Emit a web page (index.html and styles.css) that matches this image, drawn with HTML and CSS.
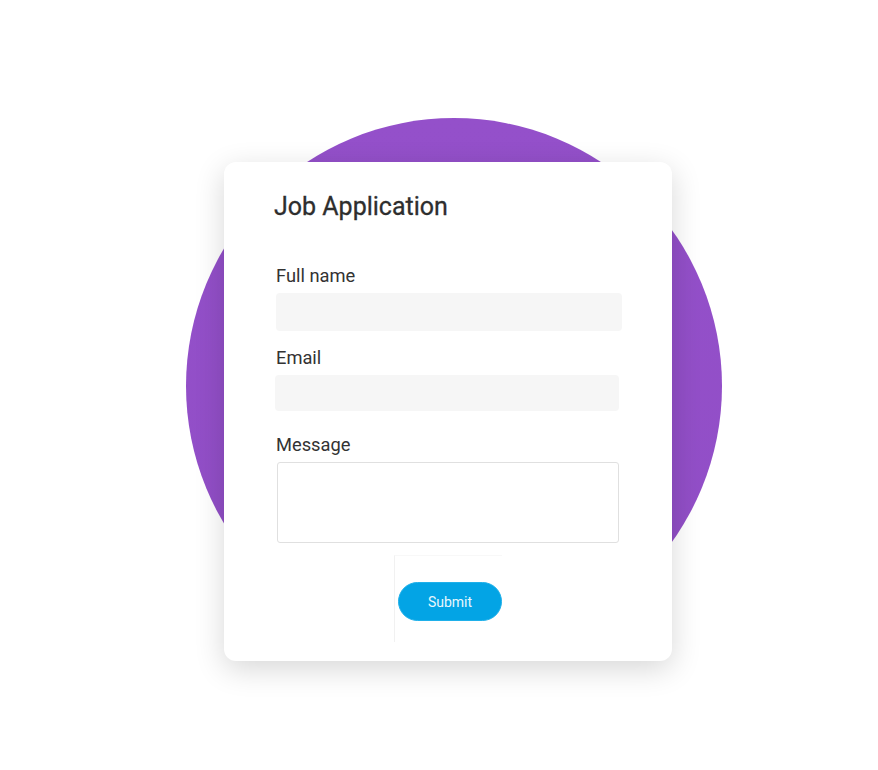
FILE: index.html
```html
<!DOCTYPE html>
<html lang="en">
<head>
    <meta charset="UTF-8">
    <meta name="viewport" content="width=device-width, initial-scale=1.0">
    <title>Job Application</title>
    <link rel="stylesheet" href="styles.css">
</head>
<body>
    <div class="stage">
        <div class="blob"></div>

        <div class="card">
            <h2 class="card-title">Job Application</h2>
            <form class="apply-form">
                <label for="fullName" class="field-label">Full name</label>
                <input type="text" id="fullName" class="field-input field-name">

                <label for="email" class="field-label label-email">Email</label>
                <input type="email" id="email" class="field-input field-email">

                <label for="message" class="field-label label-message">Message</label>
                <textarea id="message" class="field-area"></textarea>

                <div class="submit-frame">
                    <button type="submit" class="submit-btn">Submit</button>
                </div>
            </form>
        </div>
    </div>
</body>
</html>
```

FILE: styles.css
```css
body {
    margin: 0;
    padding: 0;
    background-color: #ffffff;
    font-family: Roboto, "Liberation Sans", Arial, sans-serif;
    color: #333333;
    overflow: hidden;
}

.stage {
    display: grid;
    width: 878px;
    height: 770px;
}

/* purple circle sits behind the card, same grid cell */
.blob {
    grid-area: 1 / 1;
    align-self: start;
    justify-self: start;
    margin: 118px 0 0 186px;
    width: 536px;
    height: 536px;
    border-radius: 50%;
    background: linear-gradient(180deg, #9450ca 0%, #914ec6 100%);
}

.card {
    grid-area: 1 / 1;
    align-self: start;
    justify-self: start;
    margin: 162px 0 0 224px;
    width: 448px;
    box-sizing: border-box;
    padding: 31px 0 19px 0;
    background-color: #ffffff;
    border-radius: 12px;
    box-shadow: 0 8px 30px rgba(0, 0, 0, 0.16);
}

.card-title {
    margin: 0 0 0 50px;
    font-size: 25px;
    font-weight: 400;
    line-height: 28px;
    color: #2e2e2e;
    -webkit-text-stroke: 0.3px #2e2e2e;
}

.apply-form {
    display: flex;
    flex-direction: column;
    align-items: flex-start;
    padding-left: 51px;
    margin-top: 44px;
}

.field-label {
    margin-left: 1px;
    font-size: 18.3px;
    line-height: 21px;
    color: #333333;
}

.label-email {
    margin-top: 16px;
}

.label-message {
    margin-top: 23px;
}

.field-input {
    border: none;
    outline: none;
    background-color: #f6f6f6;
    border-radius: 4px;
    box-sizing: border-box;
    padding: 0 10px;
    font-family: inherit;
}

.field-name {
    margin: 7px 0 0 1px;
    width: 346px;
    height: 38px;
}

.field-email {
    margin: 7px 0 0 0;
    width: 344px;
    height: 36px;
}

.field-area {
    margin: 7px 0 0 2px;
    width: 342px;
    height: 81px;
    box-sizing: border-box;
    border: 1px solid #e0e0e0;
    border-radius: 3px;
    background-color: #ffffff;
    resize: none;
    outline: none;
    font-family: inherit;
}

.submit-frame {
    align-self: center;
    margin: 12px 0 0 -51px;
    width: 108px;
    box-sizing: border-box;
    padding: 26px 0 21px 3px;
    border-left: 1px solid #f1f1f1;
    border-top: 1px solid #f8f8f8;
}

.submit-btn {
    display: block;
    width: 104px;
    height: 39px;
    border: 1px solid #1fb0ea;
    border-radius: 20px;
    background-color: #03a4e5;
    color: #e8f7fd;
    font-family: inherit;
    font-size: 14px;
    cursor: pointer;
}
```
